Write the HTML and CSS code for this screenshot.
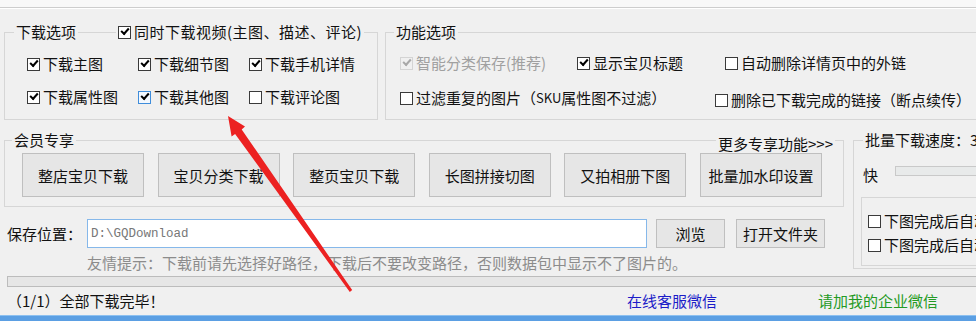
FILE: index.html
```html
<!DOCTYPE html>
<html>
<head>
    <meta charset="UTF-8">
    <title>宝贝下载</title>
    <link rel="stylesheet" href="styles.css">
</head>
<body>
<div class="app">
    <div class="topbar"></div>

    <div class="row-top">
        <!-- 下载选项 -->
        <section class="group g-down">
            <div class="group-head">
                <span class="legend">下载选项</span>
                <label class="chk legend-chk"><i class="box on"></i>同时下载视频(主图、描述、评论)</label>
            </div>
            <div class="opt-grid">
                <label class="chk"><i class="box on"></i>下载主图</label>
                <label class="chk"><i class="box on"></i>下载细节图</label>
                <label class="chk"><i class="box on"></i>下载手机详情</label>
                <label class="chk"><i class="box on"></i>下载属性图</label>
                <label class="chk"><i class="box on focus"></i>下载其他图</label>
                <label class="chk"><i class="box"></i>下载评论图</label>
            </div>
        </section>

        <!-- 功能选项 -->
        <section class="group g-func">
            <div class="group-head">
                <span class="legend">功能选项</span>
            </div>
            <div class="func-rows">
                <div class="func-row">
                    <label class="chk w177 disabled"><i class="box on"></i>智能分类保存(推荐)</label>
                    <label class="chk w148"><i class="box on"></i>显示宝贝标题</label>
                    <label class="chk"><i class="box"></i>自动删除详情页中的外链</label>
                </div>
                <div class="func-row second">
                    <label class="chk w315"><i class="box"></i>过滤重复的图片（<span class="sku">SKU</span>属性图不过滤）</label>
                    <label class="chk lower"><i class="box"></i>删除已下载完成的链接（断点续传）</label>
                </div>
            </div>
        </section>
    </div>

    <div class="row-mid">
        <div class="col-left">
            <!-- 会员专享 -->
            <section class="group g-vip">
                <div class="group-head">
                    <span class="legend">会员专享</span>
                    <span class="legend more">更多专享功能&gt;&gt;&gt;</span>
                </div>
                <div class="btn-row">
                    <button class="btn">整店宝贝下载</button>
                    <button class="btn">宝贝分类下载</button>
                    <button class="btn">整页宝贝下载</button>
                    <button class="btn">长图拼接切图</button>
                    <button class="btn">又拍相册下图</button>
                    <button class="btn">批量加水印设置</button>
                </div>
            </section>

            <div class="save-row">
                <span class="save-label">保存位置：</span>
                <input class="path" type="text" value="D:\GQDownload">
                <button class="btn btn-sm browse">浏览</button>
                <button class="btn btn-sm open">打开文件夹</button>
            </div>
            <p class="hint">友情提示：下载前请先选择好路径，下载后不要改变路径，否则数据包中显示不了图片的。</p>
        </div>

        <!-- 批量下载速度 -->
        <section class="group g-speed">
            <div class="group-head">
                <span class="legend">批量下载速度：3</span>
            </div>
            <div class="speed-row">
                <span>快</span>
                <div class="track"></div>
            </div>
            <div class="inner">
                <label class="chk"><i class="box"></i>下图完成后自动关机</label>
                <label class="chk"><i class="box"></i>下图完成后自动打开文件夹</label>
            </div>
        </section>
    </div>

    <div class="progress"></div>

    <div class="status">
        <span class="st-msg">（1/1）全部下载完毕！</span>
        <span class="st-kf">在线客服微信</span>
        <span class="st-wx">请加我的企业微信</span>
    </div>
    <div class="taskbar"></div>

    <!-- 红色箭头 -->
    <svg class="arrow" width="976" height="321" viewBox="0 0 976 321">
        <polygon points="228,116 245,126.6 241.7,129.4 352.2,290.1 349.8,291.9 235.1,134 231.6,136.6" fill="#ec2121"/>
    </svg>
</div>
</body>
</html>
```

FILE: styles.css
```css
body {
    margin: 0;
    background-color: #f0f0f0;
    overflow: hidden;
    font-family: "Noto Sans CJK SC", sans-serif;
    font-size: 15px;
    line-height: 18px;
    color: #111;
}
.app {
    position: relative;
    width: 1100px;
    height: 321px;
}
.topbar {
    height: 7px;
    background-color: #f8f8f8;
    border-bottom: 1px solid #cdcdcd;
    box-shadow: 0 1px 0 #fff;
}

/* group boxes */
.group {
    border: 1px solid #d6d6d6;
    box-sizing: border-box;
}
.group-head {
    display: flex;
    height: 18px;
    margin-top: -10px;
}
.legend {
    background-color: #f0f0f0;
    padding: 0 2px;
    white-space: nowrap;
}

/* checkbox */
.chk {
    display: flex;
    align-items: center;
    white-space: nowrap;
}
.box {
    position: relative;
    flex: none;
    width: 13px;
    height: 13px;
    box-sizing: border-box;
    border: 1px solid #3a3a3a;
    background-color: #fff;
    margin-right: 3px;
}
.box.on::after {
    content: "";
    position: absolute;
    left: 2px;
    top: 1.5px;
    width: 6px;
    height: 3px;
    border-left: 2px solid #000;
    border-bottom: 2px solid #000;
    transform: rotate(-48deg);
}
.box.focus {
    border-color: #3f8ddb;
    background-color: #f3f8fe;
}
.disabled {
    color: #a0a0a0;
}
.disabled .box {
    border-color: #d4d4d4;
    background-color: #f0f0f0;
}
.disabled .box.on::after {
    border-color: #a8a8a8;
}

/* top row */
.row-top {
    display: flex;
    margin-top: 24px;
    padding-left: 4px;
}
.g-down {
    width: 374px;
}
.g-down .group-head {
    padding-left: 9px;
}
.legend-chk {
    background-color: #f0f0f0;
    padding: 0 2px;
    margin-left: 38px;
    letter-spacing: 0.5px;
}
.opt-grid {
    display: grid;
    grid-template-columns: 111px 111px auto;
    grid-auto-rows: 18px;
    row-gap: 15px;
    padding: 14px 0 13px 22px;
}
.g-func {
    flex: 1;
    margin-left: 7px;
}
.g-func .group-head {
    padding-left: 8px;
}
.func-rows {
    padding: 13px 0 12px 14px;
}
.func-row {
    display: flex;
    align-items: flex-start;
    height: 18px;
}
.func-row.second {
    margin-top: 17px;
}
.w177 { width: 177px; }
.w148 { width: 148px; }
.w315 { width: 315px; }
.lower {
    margin-top: 2px;
}
.sku {
    font-size: 13px;
}

/* middle row */
.row-mid {
    display: flex;
    align-items: flex-start;
    padding-left: 4px;
}
.col-left {
    width: 840px;
}
.g-vip {
    margin-top: 20px;
}
.g-vip .group-head {
    padding-left: 7px;
}
.more {
    margin-left: auto;
    margin-right: 8px;
    margin-top: 4px;
}
.btn-row {
    display: flex;
    gap: 13.6px;
    margin-top: 4px;
    padding: 0 0 9px 17px;
}
.btn {
    width: 122px;
    height: 44px;
    box-sizing: border-box;
    padding: 0;
    background-color: #e6e6e6;
    border: 1px solid #bfbfbf;
    border-radius: 0;
    font-family: inherit;
    font-size: 15px;
    color: #111;
}
.save-row {
    display: flex;
    align-items: center;
    height: 29px;
    margin-top: 12px;
    padding-left: 3px;
}
.save-label {
    width: 80px;
}
.path {
    width: 560px;
    height: 29px;
    box-sizing: border-box;
    margin: 0;
    padding: 0 3px;
    border: 1px solid #86b8ea;
    background-color: #fff;
    font-family: "Liberation Mono", monospace;
    font-size: 12.5px;
    color: #777;
    outline: none;
}
.btn-sm {
    height: 29px;
}
.browse {
    width: 69px;
    margin-left: 9px;
}
.open {
    width: 89px;
    margin-left: 11px;
}
.hint {
    margin: 6px 0 0 83px;
    color: #8c8c8c;
    white-space: nowrap;
}

/* speed */
.g-speed {
    flex: 1;
    margin-left: 9px;
    margin-top: 20px;
}
.g-speed .group-head {
    padding-left: 9px;
}
.speed-row {
    display: flex;
    align-items: flex-start;
    height: 18px;
    margin-top: 17px;
    padding-left: 9px;
}
.track {
    flex: 1;
    height: 8px;
    margin-left: 17px;
    border: 1px solid #c9c9c9;
    background-color: #e8eaea;
}
.inner {
    display: flex;
    flex-direction: column;
    gap: 6px;
    margin: 13px 0 2px 7px;
    padding: 14px 0 11px 6px;
    border: 1px solid #d6d6d6;
}
.inner .chk {
    height: 18px;
}

/* bottom */
.progress {
    height: 9px;
    margin: 4px 0 0 7px;
    border: 1px solid #bcbcbc;
    background-color: #e6e6e6;
}
.status {
    display: flex;
    align-items: center;
    height: 28px;
    padding-left: 7px;
}
.st-msg {
    width: 620px;
}
.st-kf {
    width: 191px;
    color: #1c1cc8;
}
.st-wx {
    color: #249a24;
}
.taskbar {
    height: 5px;
    background-color: #5b9fe3;
    border-top: 1px solid #8cc0f0;
}
.arrow {
    position: absolute;
    left: 0;
    top: 0;
    pointer-events: none;
}
```
